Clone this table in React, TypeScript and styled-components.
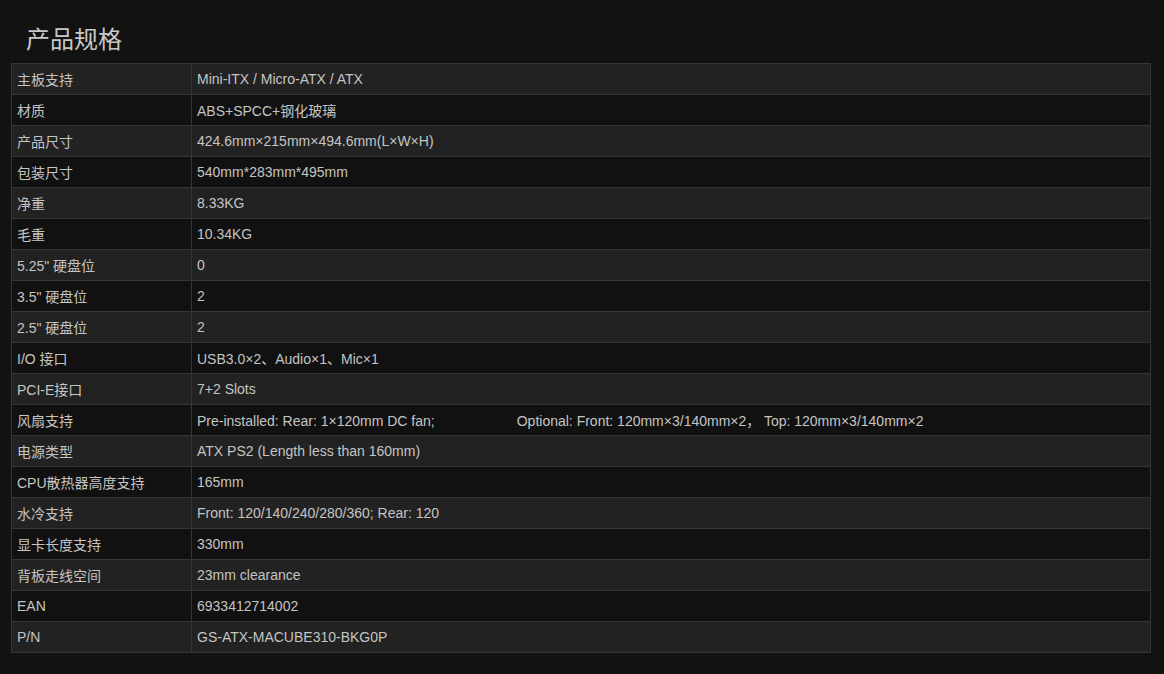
import React from 'react';
import styled, { createGlobalStyle } from 'styled-components';

const SPECS = [
  { id: 1, label: '主板支持', value: 'Mini-ITX / Micro-ATX / ATX' },
  { id: 2, label: '材质', value: 'ABS+SPCC+钢化玻璃' },
  { id: 3, label: '产品尺寸', value: '424.6mm×215mm×494.6mm(L×W×H)' },
  { id: 4, label: '包装尺寸', value: '540mm*283mm*495mm' },
  { id: 5, label: '净重', value: '8.33KG' },
  { id: 6, label: '毛重', value: '10.34KG' },
  { id: 7, label: '5.25" 硬盘位', value: '0' },
  { id: 8, label: '3.5" 硬盘位', value: '2' },
  { id: 9, label: '2.5" 硬盘位', value: '2' },
  { id: 10, label: 'I/O 接口', value: 'USB3.0×2、Audio×1、Mic×1' },
  { id: 11, label: 'PCI-E接口', value: '7+2 Slots' },
  { id: 12, label: '风扇支持', value: 'fan' },
  { id: 13, label: '电源类型', value: 'ATX PS2 (Length less than 160mm)' },
  { id: 14, label: 'CPU散热器高度支持', value: '165mm' },
  { id: 15, label: '水冷支持', value: 'Front: 120/140/240/280/360; Rear: 120' },
  { id: 16, label: '显卡长度支持', value: '330mm' },
  { id: 17, label: '背板走线空间', value: '23mm clearance' },
  { id: 18, label: 'EAN', value: '6933412714002' },
  { id: 19, label: 'P/N', value: 'GS-ATX-MACUBE310-BKG0P' },
];

const App = () => {
  return (
    <>
      <GlobalStyle />
      <SpecSection>
        <SpecTitle>产品规格</SpecTitle>
        <SpecTable>
          <colgroup>
            <col style={{ width: 180 }} />
            <col />
          </colgroup>
          <tbody>
            {SPECS.map(({ id, label, value }) => (
              <SpecRow key={id} $odd={id % 2 === 1}>
                <SpecCell>{label}</SpecCell>
                <SpecCell>
                  {value === 'fan' ? (
                    <>
                      Pre-installed: Rear: 1×120mm DC fan;
                      <FanGap />
                      Optional: Front: 120mm×3/140mm×2， Top: 120mm×3/140mm×2
                    </>
                  ) : (
                    value
                  )}
                </SpecCell>
              </SpecRow>
            ))}
          </tbody>
        </SpecTable>
      </SpecSection>
    </>
  );
};

const GlobalStyle = createGlobalStyle`
  html, body {
    margin: 0;
    background-color: #121212;
  }
  body {
    font-family: "Liberation Sans", "Noto Sans CJK SC", Arial, sans-serif;
  }
`;

const SpecSection = styled.div`
  padding: 26px 0 0 11px;
  width: 1140px;
`;

const SpecTitle = styled.h2`
  margin: 0 0 9px 15px;
  font-size: 24px;
  line-height: 28px;
  font-weight: normal;
  color: #c8c8c8;
`;

const SpecTable = styled.table`
  width: 1140px;
  border-collapse: collapse;
  table-layout: fixed;
`;

const SpecRow = styled.tr<{ $odd: boolean }>`
  background-color: ${props => (props.$odd ? '#222222' : '#111111')};
`;

const SpecCell = styled.td`
  height: 31px;
  padding: 0 0 0 5px;
  border: 1px solid #353535;
  font-size: 14px;
  color: #c4c4c4;
  white-space: nowrap;
  box-sizing: border-box;
`;

const FanGap = styled.span`
  display: inline-block;
  width: 82px;
`;

export default App;
